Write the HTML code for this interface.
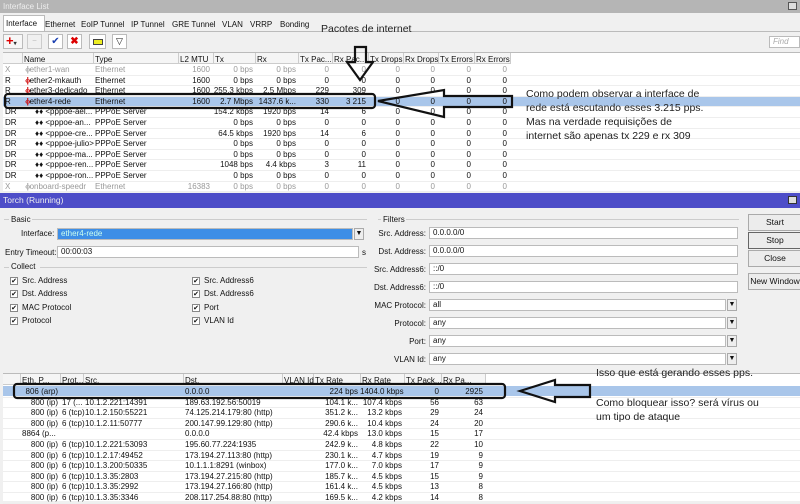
<!DOCTYPE html>
<html><head><meta charset="utf-8"><style>
*{margin:0;padding:0;box-sizing:border-box}
body{width:800px;height:501px;overflow:hidden;background:#f0f0f0;font-family:"Liberation Sans",sans-serif;font-size:8px;color:#111;position:relative}
.a{position:absolute;white-space:nowrap}
.r{text-align:right}
.g{color:#999}
.line{position:absolute;background:#ddd}
.tx{font-family:"Liberation Sans",sans-serif;font-size:10.5px;color:#222;position:absolute;white-space:nowrap;z-index:10}
.inp{position:absolute;background:#fff;border:1px solid #bbb;height:12px;padding-left:3px;line-height:10px}
.dd{position:absolute;width:10px;height:12px;border:1px solid #aaa;background:#eee;font-size:7px;text-align:center;line-height:10px}
.cb{position:absolute;width:8px;height:8px;border:1px solid #888;background:#fff;font-size:7px;line-height:7px;text-align:center}
.btn{position:absolute;left:748px;width:54px;height:17px;border:1px solid #aaa;background:#ececec;text-align:center;line-height:15px;font-size:8.5px;white-space:nowrap}
.ic{color:#c00;font-weight:bold;letter-spacing:-1px}
</style></head><body>
<div class="a" style="left:0;top:0;width:800px;height:13px;background:#b5b5b5;color:#eee;padding:2px 3px;font-size:8px">Interface List</div>
<div class="a" style="left:788px;top:2px;width:9px;height:8px;border:1px solid #555;background:#ddd"></div>
<div class="a" style="left:3px;top:15px;width:42px;height:16px;background:#fff;border:1px solid #bbb;border-bottom:none"></div>
<div class="a" style="top:19px;left:6px">Interface</div>
<div class="a" style="top:20px;left:45px">Ethernet</div>
<div class="a" style="top:20px;left:81px">EoIP Tunnel</div>
<div class="a" style="top:20px;left:131px">IP Tunnel</div>
<div class="a" style="top:20px;left:172px">GRE Tunnel</div>
<div class="a" style="top:20px;left:222px">VLAN</div>
<div class="a" style="top:20px;left:250px">VRRP</div>
<div class="a" style="top:20px;left:280px">Bonding</div>
<div class="a" style="left:3px;top:31px;width:797px;height:1px;background:#bbb"></div>
<div class="a" style="left:3px;top:34px;width:20px;height:15px;border:1px solid #bbb;background:#f7f7f7;color:#d00;font-size:13px;line-height:12px;font-weight:bold;padding-left:2px">+<span style="font-size:6px;color:#333">▾</span></div>
<div class="a" style="left:27px;top:34px;width:15px;height:15px;border:1px solid #ccc;color:#bbb;text-align:center;line-height:12px">−</div>
<div class="a" style="left:48px;top:34px;width:15px;height:15px;border:1px solid #bbb;background:#fff;color:#1a3fb0;text-align:center;font-size:10px;line-height:13px">✔</div>
<div class="a" style="left:67px;top:34px;width:15px;height:15px;border:1px solid #bbb;background:#fff;color:#d00;text-align:center;font-size:10px;line-height:13px;font-weight:bold">✖</div>
<div class="a" style="left:89px;top:34px;width:17px;height:15px;border:1px solid #bbb;background:#fff"><div style="margin:4px 3px;width:10px;height:6px;background:#ee2;border:1px solid #444"></div></div>
<div class="a" style="left:112px;top:34px;width:15px;height:15px;border:1px solid #bbb;background:#fff;text-align:center;line-height:13px;font-size:9px">▽</div>
<div class="a" style="left:769px;top:36px;width:31px;height:12px;border:1px solid #bbb;background:#fff;color:#aaa;font-style:italic;padding-left:3px;font-size:8px">Find</div>
<div class="a" style="left:3px;top:52px;width:797px;height:140px;background:#fff;border-top:1px solid #bbb"></div>
<div class="a" style="left:3px;top:53px;width:507px;height:11px;background:#f5f5f5;border-bottom:1px solid #ccc"></div>
<div class="a" style="left:3px;top:96px;width:797px;height:10px;background:#a9c6ea"></div>
<div class="a" style="left:0;top:193px;width:800px;height:15px;background:#4d4dc8;color:#eee;padding:2px 3px;font-size:8.5px">Torch (Running)</div>
<div class="a" style="left:788px;top:196px;width:9px;height:8px;border:1px solid #333;background:#ddd"></div>
<div class="a" style="left:11px;top:215px">Basic</div>
<div class="line" style="left:4px;top:219px;width:5px;height:1px;background:#ccc"></div>
<div class="line" style="left:32px;top:219px;width:335px;height:1px;background:#ccc"></div>
<div class="a" style="left:21px;top:229px">Interface:</div>
<div class="inp" style="left:57px;top:228px;width:296px;background:#3d8ee6;color:#cfe;">ether4-rede</div>
<div class="dd" style="left:354px;top:228px">▼</div>
<div class="a" style="left:5px;top:248px">Entry Timeout:</div>
<div class="inp" style="left:57px;top:246px;width:302px">00:00:03</div>
<div class="a" style="left:362px;top:248px">s</div>
<div class="a" style="left:11px;top:262px">Collect</div>
<div class="line" style="left:4px;top:267px;width:5px;height:1px;background:#ccc"></div>
<div class="line" style="left:40px;top:267px;width:327px;height:1px;background:#ccc"></div>
<div class="cb" style="left:10px;top:277px">✔</div><div class="a" style="left:22px;top:276px">Src. Address</div>
<div class="cb" style="left:10px;top:290px">✔</div><div class="a" style="left:22px;top:289px">Dst. Address</div>
<div class="cb" style="left:10px;top:304px">✔</div><div class="a" style="left:22px;top:303px">MAC Protocol</div>
<div class="cb" style="left:10px;top:317px">✔</div><div class="a" style="left:22px;top:316px">Protocol</div>
<div class="cb" style="left:192px;top:277px">✔</div><div class="a" style="left:204px;top:276px">Src. Address6</div>
<div class="cb" style="left:192px;top:290px">✔</div><div class="a" style="left:204px;top:289px">Dst. Address6</div>
<div class="cb" style="left:192px;top:304px">✔</div><div class="a" style="left:204px;top:303px">Port</div>
<div class="cb" style="left:192px;top:317px">✔</div><div class="a" style="left:204px;top:316px">VLAN Id</div>
<div class="a" style="left:383px;top:215px">Filters</div>
<div class="line" style="left:378px;top:219px;width:3px;height:1px;background:#ccc"></div>
<div class="line" style="left:406px;top:219px;width:333px;height:1px;background:#ccc"></div>
<div class="btn" style="top:214px">Start</div>
<div class="btn" style="top:232px;border-color:#666">Stop</div>
<div class="btn" style="top:250px">Close</div>
<div class="btn" style="top:273px">New Window</div>
<div class="a" style="left:3px;top:373px;width:797px;height:128px;background:#fff;border-top:1px solid #bbb"></div>
<div class="a" style="left:3px;top:374px;width:482px;height:11px;background:#f5f5f5;border-bottom:1px solid #ccc"></div>
<div class="a" style="left:3px;top:386px;width:797px;height:10px;background:#a9c6ea"></div>
<div class="tx" style="left:321px;top:23px">Pacotes de internet</div>
<div class="tx" style="left:526px;top:87px;line-height:14px">Como podem observar a interface de<br>rede está escutando esses 3.215 pps.<br>Mas na verdade requisições de<br>internet são apenas tx 229 e rx 309</div>
<div class="tx" style="left:596px;top:367px">Isso que está gerando esses pps.</div>
<div class="tx" style="left:596px;top:396px;line-height:14px">Como bloquear isso? será vírus ou<br>um tipo de ataque</div>
<svg class="a" style="left:0;top:0;z-index:11" width="800" height="501">
<g fill="none" stroke="#111" stroke-width="2.2">
<rect x="5" y="94" width="370" height="14" rx="3"/>
<path d="M355 47 H366 V62 H373 L360 80 L347 62 H355 Z"/>
<path d="M378 101 L444 90 V96 H512 V107 H444 V117 Z"/>
<rect x="14" y="384" width="491" height="14" rx="3"/>
<path d="M520 391 L555 380 V385 H590 V397 H555 V402 Z"/>
</g>
</svg>
<script>
function cell(x,y,t,w,cls,html){var d=document.createElement('div');d.className='a '+(cls||'');d.style.left=x+'px';d.style.top=y+'px';if(w){d.style.width=w+'px';d.className+=' r'}if(html)d.innerHTML=t;else d.textContent=t;document.body.appendChild(d)}
function vline(x,y,h){var d=document.createElement('div');d.className='line';d.style.cssText='left:'+x+'px;top:'+y+'px;width:1px;height:'+h+'px;background:#ccc';document.body.appendChild(d)}
var tc=[22,93,178,213,255,298,332,368,403,438,474,510];
tc.forEach(function(x){vline(x,53,11)});
var th=['Name','Type','L2 MTU','Tx','Rx','Tx Pac...','Rx Pac...','Tx Drops','Rx Drops','Tx Errors','Rx Errors'];
th.forEach(function(t,i){cell(tc[i]+2,55,t)});
var rows=[
['X','ether1-wan','Ethernet','1600','0 bps','0 bps','0','0',1],
['R','ether2-mkauth','Ethernet','1600','0 bps','0 bps','0','0'],
['R','ether3-dedicado','Ethernet','1600','255.3 kbps','2.5 Mbps','229','309'],
['R','ether4-rede','Ethernet','1600','2.7 Mbps','1437.6 k...','330','3 215'],
['DR','&lt;pppoe-ael...','PPPoE Server','','154.2 kbps','1920 bps','14','6'],
['DR','&lt;pppoe-an...','PPPoE Server','','0 bps','0 bps','0','0'],
['DR','&lt;pppoe-cre...','PPPoE Server','','64.5 kbps','1920 bps','14','6'],
['DR','&lt;pppoe-julio&gt;','PPPoE Server','','0 bps','0 bps','0','0'],
['DR','&lt;pppoe-ma...','PPPoE Server','','0 bps','0 bps','0','0'],
['DR','&lt;pppoe-ren...','PPPoE Server','','1048 bps','4.4 kbps','3','11'],
['DR','&lt;pppoe-ron...','PPPoE Server','','0 bps','0 bps','0','0'],
['X','onboard-speedr','Ethernet','16383','0 bps','0 bps','0','0',1]];
rows.forEach(function(r,i){var y=65+i*10.6;var g=r[8]?'g':'';
var l=document.createElement('div');l.className='line';l.style.cssText='left:3px;top:'+(y+9.6)+'px;width:797px;height:1px;background:#eee';document.body.appendChild(l);
cell(5,y,r[0],0,g);
var pp=r[0]=='DR';
if(pp)cell(35,y,'\u2666\u2666 '+r[1],0,'',1);
else cell(25,y,'<span class="ic" style="'+(r[8]?'color:#aaa':'')+'">&lsaquo;|&rsaquo;</span>'+r[1],0,g,1);
cell(95,y,r[2],0,g);
cell(178,y,r[3],32,g);cell(213,y,r[4],40,g);cell(255,y,r[5],41,g);
cell(298,y,r[6],31,g);cell(332,y,r[7],34,g);
cell(368,y,'0',32,g);cell(403,y,'0',32,g);cell(438,y,'0',33,g);cell(474,y,'0',33,g);
});
var f=[['Src. Address:','0.0.0.0/0',0],['Dst. Address:','0.0.0.0/0',0],['Src. Address6:','::/0',0],['Dst. Address6:','::/0',0],['MAC Protocol:','all',1],['Protocol:','any',1],['Port:','any',1],['VLAN Id:','any',1]];
f.forEach(function(r,i){var y=227+i*18;cell(360,y+2,r[0],66);
var d=document.createElement('div');d.className='inp';d.style.left='429px';d.style.top=y+'px';d.style.width=(r[2]?297:309)+'px';d.textContent=r[1];document.body.appendChild(d);
if(r[2]){var e=document.createElement('div');e.className='dd';e.style.left='727px';e.style.top=y+'px';e.textContent='\u25bc';document.body.appendChild(e)}});
var bc=[20,60,83,183,282,313,360,404,441,485];
bc.forEach(function(x){vline(x,374,11)});
['Eth. P...','Prot...','Src.','Dst.','VLAN Id','Tx Rate','Rx Rate','Tx Pack...','Rx Pa...'].forEach(function(t,i){cell(bc[i]+2,376,t)});
var b=[['806 (arp)','','','0.0.0.0','224 bps','1404.0 kbps','0','2925'],
['800 (ip)','17 (...','10.1.2.221:14391','189.63.192.56:50019','104.1 k...','107.4 kbps','56','63'],
['800 (ip)','6 (tcp)','10.1.2.150:55221','74.125.214.179:80 (http)','351.2 k...','13.2 kbps','29','24'],
['800 (ip)','6 (tcp)','10.1.2.11:50777','200.147.99.129:80 (http)','290.6 k...','10.4 kbps','24','20'],
['8864 (p...','','','0.0.0.0','42.4 kbps','13.0 kbps','15','17'],
['800 (ip)','6 (tcp)','10.1.2.221:53093','195.60.77.224:1935','242.9 k...','4.8 kbps','22','10'],
['800 (ip)','6 (tcp)','10.1.2.17:49452','173.194.27.113:80 (http)','230.1 k...','4.7 kbps','19','9'],
['800 (ip)','6 (tcp)','10.1.3.200:50335','10.1.1.1:8291 (winbox)','177.0 k...','7.0 kbps','17','9'],
['800 (ip)','6 (tcp)','10.1.3.35:2803','173.194.27.215:80 (http)','185.7 k...','4.5 kbps','15','9'],
['800 (ip)','6 (tcp)','10.1.3.35:2992','173.194.27.166:80 (http)','161.4 k...','4.5 kbps','13','8'],
['800 (ip)','6 (tcp)','10.1.3.35:3346','208.117.254.88:80 (http)','169.5 k...','4.2 kbps','14','8']];
b.forEach(function(r,i){var y=387+i*10.6;
var l=document.createElement('div');l.className='line';l.style.cssText='left:3px;top:'+(y+9.6)+'px;width:797px;height:1px;background:#eee';document.body.appendChild(l);
if(i==4)cell(22,y,r[0]);else cell(20,y,r[0],38);
cell(62,y,r[1]);cell(85,y,r[2]);cell(185,y,r[3]);
cell(313,y,r[4],45);cell(360,y,r[5],42);cell(404,y,r[6],35);cell(441,y,r[7],42);
});
</script>
</body></html>
